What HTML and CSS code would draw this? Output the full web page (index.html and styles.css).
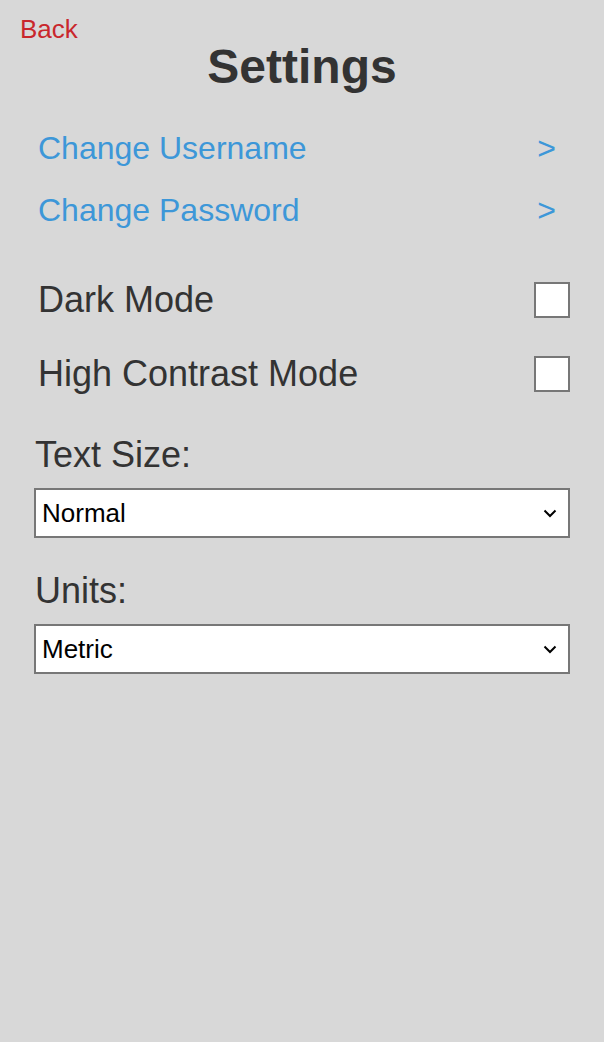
FILE: index.html
```html
<!DOCTYPE html>
<html lang="en">
<head>
  <meta charset="UTF-8" />
  <meta name="viewport" content="width=device-width, initial-scale=1.0" />
  <title>Settings</title>
  <link rel="stylesheet" href="styles.css">
</head>
<body>
  <div class="header">
    <a class="back" href="#">Back</a>
    <h1>Settings</h1>
  </div>

  <div class="container">
    <div class="links">
      <a class="link-row" href="#"><span>Change Username</span><span>&gt;</span></a>
      <a class="link-row" href="#"><span>Change Password</span><span>&gt;</span></a>
    </div>

    <div class="toggles">
      <label class="toggle-row">
        <span>Dark Mode</span>
        <input type="checkbox" id="darkMode">
      </label>
      <label class="toggle-row">
        <span>High Contrast Mode</span>
        <input type="checkbox" id="highContrast">
      </label>
    </div>

    <div class="field">
      <label for="textSize">Text Size:</label>
      <div class="select-wrap">
        <select id="textSize">
          <option>Normal</option>
          <option>Large</option>
          <option>Extra Large</option>
        </select>
        <svg class="chevron" width="14" height="9" viewBox="0 0 14 9"><path d="M1.5 1.5 L7 7 L12.5 1.5" fill="none" stroke="#000" stroke-width="2"/></svg>
      </div>
    </div>

    <div class="field">
      <label for="units">Units:</label>
      <div class="select-wrap">
        <select id="units">
          <option>Metric</option>
          <option>Imperial</option>
        </select>
        <svg class="chevron" width="14" height="9" viewBox="0 0 14 9"><path d="M1.5 1.5 L7 7 L12.5 1.5" fill="none" stroke="#000" stroke-width="2"/></svg>
      </div>
    </div>
  </div>
</body>
</html>
```

FILE: styles.css
```css
* {
  box-sizing: border-box;
}

body {
  margin: 0;
  font-family: 'Liberation Sans', Arial, sans-serif;
  background: #d8d8d8;
  color: #333333;
  min-height: 100vh;
}

.header {
  padding: 15px 20px 0;
}

.back {
  display: block;
  color: #c9272c;
  font-size: 26px;
  line-height: 28px;
  text-decoration: none;
}

h1 {
  margin: 0;
  font-size: 48px;
  font-weight: 700;
  line-height: 48px;
  text-align: center;
  color: #333333;
}

.container {
  margin: 26px 34px 0;
}

.link-row {
  display: flex;
  justify-content: space-between;
  align-items: center;
  height: 62px;
  padding: 0 14px 0 4px;
  font-size: 32px;
  color: #3d97d8;
  text-decoration: none;
}

.toggles {
  margin-top: 22px;
}

.toggle-row {
  display: flex;
  justify-content: space-between;
  align-items: center;
  height: 74px;
  padding-left: 4px;
  font-size: 36px;
  color: #333333;
}

.toggle-row input {
  appearance: none;
  margin: 0;
  width: 36px;
  height: 36px;
  background: #ffffff;
  border: 2px solid #777777;
  cursor: pointer;
}

.toggle-row input:checked {
  background: #3d97d8;
}

.field {
  margin-top: 23px;
}

.field + .field {
  margin-top: 32px;
}

.field label {
  display: block;
  font-size: 36px;
  line-height: 42px;
  padding-left: 1px;
  color: #333333;
}

.select-wrap {
  position: relative;
  margin-top: 12px;
}

select {
  appearance: none;
  display: block;
  width: 100%;
  height: 50px;
  padding: 0 40px 0 6px;
  border: 2px solid #777777;
  border-radius: 0;
  background: #ffffff;
  color: #000000;
  font-family: 'Liberation Sans', Arial, sans-serif;
  font-size: 26px;
}

.chevron {
  position: absolute;
  right: 13px;
  top: 21px;
  pointer-events: none;
}
```
